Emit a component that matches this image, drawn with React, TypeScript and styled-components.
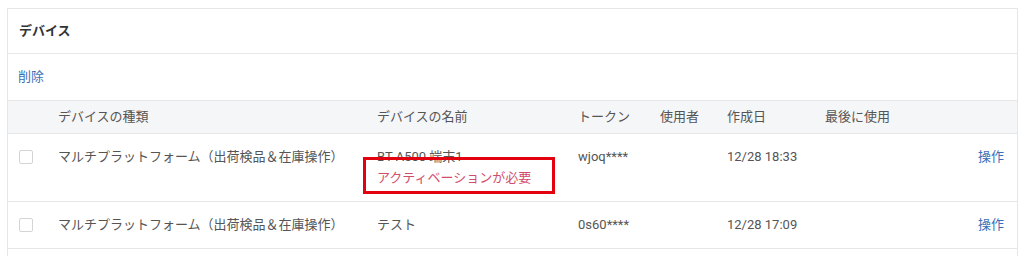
import styled, { createGlobalStyle } from "styled-components";

const GlobalStyle = createGlobalStyle`
    html, body {
        margin: 0;
        padding: 0;
        background: #ffffff;
        overflow: hidden;
    }
    body {
        font-family: "Roboto", "Noto Sans CJK JP", sans-serif;
        font-size: 13px;
        color: #555555;
    }
`;

const Page = styled.div`
    padding: 8px 6px 0 7px;
`;

const Card = styled.section`
    border: 1px solid #e6e6e6;
    border-bottom: none;
    background: #ffffff;
    height: 247px;
    overflow: hidden;
`;

const CardTitle = styled.h2`
    margin: 0;
    height: 41px;
    padding: 0 11px 3px;
    display: flex;
    align-items: center;
    font-size: 13px;
    font-weight: 700;
    color: #333333;
    border-bottom: 1px solid #e8e8e8;
`;

const Toolbar = styled.div`
    height: 43px;
    padding: 0 10px 3px;
    display: flex;
    align-items: center;
`;

const LinkButton = styled.a`
    color: #3b6fb6;
    font-size: 13px;
    cursor: pointer;
`;

const COLUMNS = "50px 319px 201px 82px 67px 98px 1fr auto";

const Row = styled.div<{ header?: boolean }>`
    display: grid;
    grid-template-columns: ${COLUMNS};
    align-items: start;
    background: ${({ header }) => (header ? "#f5f6f8" : "#ffffff")};
    border-top: 1px solid #e6e6e6;
    padding: ${({ header }) => (header ? "5px 0 6px" : "12px 0 13px")};
    line-height: 21px;
    position: relative;
`;

const Cell = styled.div<{ align?: "left" | "right" }>`
    text-align: ${({ align }) => align ?? "left"};
    padding-right: ${({ align }) => (align === "right" ? "13px" : "0")};
    color: #555555;
    white-space: nowrap;
`;

const CheckCell = styled.div`
    padding: 4px 0 0 11px;
`;

const Checkbox = styled.span`
    display: block;
    width: 12px;
    height: 12px;
    border: 1px solid #d4d4d4;
    border-radius: 2px;
    background: #ffffff;
`;

const Warning = styled.div`
    color: #d24d6c;
`;

const Highlight = styled.div`
    position: absolute;
    left: 355px;
    top: 23px;
    width: 186px;
    height: 31px;
    border: 3px solid #e3000f;
    pointer-events: none;
`;

interface Device {
    type: string;
    name: string;
    needsActivation?: boolean;
    token: string;
    user: string;
    created: string;
    lastUsed: string;
}

const devices: Device[] = [
    {
        type: "マルチプラットフォーム（出荷検品＆在庫操作）",
        name: "BT A500 端末1",
        needsActivation: true,
        token: "wjoq****",
        user: "",
        created: "12/28 18:33",
        lastUsed: ""
    },
    {
        type: "マルチプラットフォーム（出荷検品＆在庫操作）",
        name: "テスト",
        token: "0s60****",
        user: "",
        created: "12/28 17:09",
        lastUsed: ""
    }
];

export default function App() {
    return (
        <Page>
            <GlobalStyle />
            <Card>
                <CardTitle>デバイス</CardTitle>
                <Toolbar>
                    <LinkButton>削除</LinkButton>
                </Toolbar>
                <Row header>
                    <Cell />
                    <Cell>デバイスの種類</Cell>
                    <Cell>デバイスの名前</Cell>
                    <Cell>トークン</Cell>
                    <Cell>使用者</Cell>
                    <Cell>作成日</Cell>
                    <Cell>最後に使用</Cell>
                    <Cell />
                </Row>
                {devices.map((d, i) => (
                    <Row key={i}>
                        <CheckCell>
                            <Checkbox />
                        </CheckCell>
                        <Cell>{d.type}</Cell>
                        <Cell>
                            {d.name}
                            {d.needsActivation && (
                                <Warning>アクティベーションが必要</Warning>
                            )}
                        </Cell>
                        <Cell>{d.token}</Cell>
                        <Cell>{d.user}</Cell>
                        <Cell>{d.created}</Cell>
                        <Cell>{d.lastUsed}</Cell>
                        <Cell align="right">
                            <LinkButton>操作</LinkButton>
                        </Cell>
                        {d.needsActivation && <Highlight />}
                    </Row>
                ))}
                <Row />
            </Card>
        </Page>
    );
}
